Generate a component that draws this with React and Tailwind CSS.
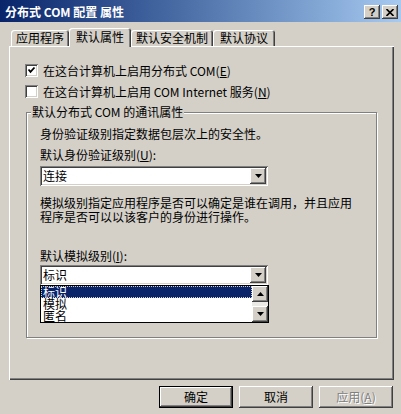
import React from 'react';

const raised = "shadow-[inset_-1px_-1px_0_#404040,inset_1px_1px_0_#fff,inset_-2px_-2px_0_#808080]";

function DownArrow() {
    return (
        <svg width="7" height="4" viewBox="0 0 7 4"><polygon points="0,0 7,0 3.5,4" fill="#000" /></svg>
    );
}

function UpArrow() {
    return (
        <svg width="7" height="4" viewBox="0 0 7 4"><polygon points="0,4 7,4 3.5,0" fill="#000" /></svg>
    );
}

function Checkbox({ checked, children }) {
    return (
        <div className="flex items-center gap-[5px] h-[13px]">
            <div className="w-[13px] h-[13px] bg-white shrink-0 flex items-center justify-center shadow-[inset_1px_1px_0_#808080,inset_-1px_-1px_0_#fff,inset_2px_2px_0_#404040,inset_-2px_-2px_0_#d4d0c8]">
                {checked && (
                    <svg width="13" height="13" viewBox="0 0 13 13">
                        <path d="M3.5 5.5 L5.5 7.8 L9.5 3.5" stroke="#000" strokeWidth="1.8" fill="none" />
                    </svg>
                )}
            </div>
            <span className="leading-[14px] whitespace-nowrap">{children}</span>
        </div>
    );
}

function Select({ value }) {
    return (
        <div className="w-[228px] h-[20px] bg-white flex items-center pl-[3px] pr-[2px] shadow-[inset_1px_1px_0_#808080,inset_-1px_-1px_0_#fff,inset_2px_2px_0_#404040,inset_-2px_-2px_0_#d4d0c8]">
            <span className="flex-1 leading-[14px]">{value}</span>
            <div className={`w-[16px] h-[16px] bg-[#d4d0c8] flex items-center justify-center ${raised}`}>
                <DownArrow />
            </div>
        </div>
    );
}

function Tab({ label, width, selected }) {
    return (
        <div
            className={`${width} ${selected ? "h-[19px] -mb-[1px] relative z-10 pb-[2px]" : "h-[16px]"} bg-[#d4d0c8] rounded-t-[3px] flex items-center justify-center whitespace-nowrap leading-[14px] shadow-[inset_1px_1px_0_#fff,inset_-1px_0_0_#404040,inset_-2px_0_0_#808080]`}
        >
            {label}
        </div>
    );
}

function Button({ label, isDefault, disabled }) {
    return (
        <div
            className={`w-[74px] h-[22px] flex items-center justify-center leading-[14px] ${isDefault ? "border border-black" : ""} ${disabled ? "text-[#808080] [text-shadow:1px_1px_0_#fff]" : ""} ${raised}`}
        >
            {label}
        </div>
    );
}

export default function App() {
    const items = ['标识', '模拟', '匿名'];

    return (
        <div className="w-[401px] h-[414px] bg-[#d4d0c8] flex flex-col overflow-hidden text-[12px] text-black font-['SimSun','Noto_Sans_CJK_SC',sans-serif]">
            {/* title bar */}
            <div className="h-[22px] pt-[2px] pl-[5px] pr-[3px] flex items-center bg-linear-to-r from-[#0a246a] to-[#a6caf0]">
                <span className="flex-1 text-white font-bold leading-[14px] whitespace-nowrap">分布式 COM 配置 属性</span>
                <div className="flex gap-[2px]">
                    <div className={`w-[16px] h-[14px] bg-[#d4d0c8] flex items-center justify-center font-['Liberation_Sans',sans-serif] font-bold text-[11px] leading-[11px] ${raised}`}>?</div>
                    <div className={`w-[16px] h-[14px] bg-[#d4d0c8] flex items-center justify-center ${raised}`}>
                        <svg width="8" height="7" viewBox="0 0 8 7">
                            <path d="M0.5 0 L7.5 7 M7.5 0 L0.5 7" stroke="#000" strokeWidth="1.6" />
                        </svg>
                    </div>
                </div>
            </div>

            <div className="pl-[9px] pr-[7px] mt-[6px]">
                {/* tabs */}
                <div className="flex items-end h-[18px] pl-[2px]">
                    <Tab label="应用程序" width="w-[58px]" />
                    <Tab label="默认属性" width="w-[62px]" selected />
                    <Tab label="默认安全机制" width="w-[82px]" />
                    <Tab label="默认协议" width="w-[62px]" />
                </div>

                {/* panel */}
                <div className="h-[334px] pt-[18px] pl-[16px] pr-[17px] shadow-[inset_1px_1px_0_#fff,inset_-1px_-1px_0_#404040,inset_-2px_-2px_0_#808080]">
                    <Checkbox checked>在这台计算机上启用分布式 COM(<u>E</u>)</Checkbox>
                    <div className="mt-[8px]">
                        <Checkbox>在这台计算机上启用 COM Internet 服务(<u>N</u>)</Checkbox>
                    </div>

                    <div className="mt-[14px] ml-[1px] border border-[#808080] pl-[13px] pb-[14px] shadow-[inset_1px_1px_0_#fff,1px_1px_0_#fff]">
                        <div className="-mt-[8px] -ml-[9px] w-fit px-[1px] bg-[#d4d0c8] leading-[14px] relative">默认分布式 COM 的通讯属性</div>

                        <p className="mt-[8px] leading-[14px]">身份验证级别指定数据包层次上的安全性。</p>
                        <p className="mt-[7px] leading-[14px]">默认身份验证级别(<u>U</u>):</p>
                        <div className="mt-[4px]">
                            <Select value="连接" />
                        </div>

                        <p className="mt-[10px] leading-[14px] whitespace-nowrap">
                            模拟级别指定应用程序是否可以确定是谁在调用，并且应用<br />
                            程序是否可以以该客户的身份进行操作。
                        </p>

                        <p className="mt-[25px] leading-[14px]">默认模拟级别(<u>I</u>):</p>
                        <div className="mt-[2px]">
                            <Select value="标识" />
                        </div>

                        {/* open list */}
                        <div className="w-[229px] h-[38px] border border-black bg-white flex">
                            <div className="flex-1 flex flex-col">
                                {items.map((item, idx) => (
                                    <div
                                        key={item}
                                        className={`h-[12px] leading-[12px] pl-[2px] ${idx === 0 ? "bg-[#0a246a] text-white outline-1 outline-dotted -outline-offset-1 outline-[#d4d0c8]" : ""}`}
                                    >
                                        {item}
                                    </div>
                                ))}
                            </div>
                            <div className="w-[16px] flex flex-col">
                                <div className={`h-[16px] bg-[#d4d0c8] flex items-center justify-center ${raised}`}>
                                    <UpArrow />
                                </div>
                                <div className="flex-1 bg-[#ebe9e5]" />
                                <div className={`h-[16px] bg-[#d4d0c8] flex items-center justify-center ${raised}`}>
                                    <DownArrow />
                                </div>
                            </div>
                        </div>
                    </div>
                </div>
            </div>

            {/* buttons */}
            <div className="flex justify-end gap-[6px] mt-[6px] pr-[8px]">
                <Button label="确定" isDefault />
                <Button label="取消" />
                <Button label={<span>应用(<u>A</u>)</span>} disabled />
            </div>
        </div>
    );
}
